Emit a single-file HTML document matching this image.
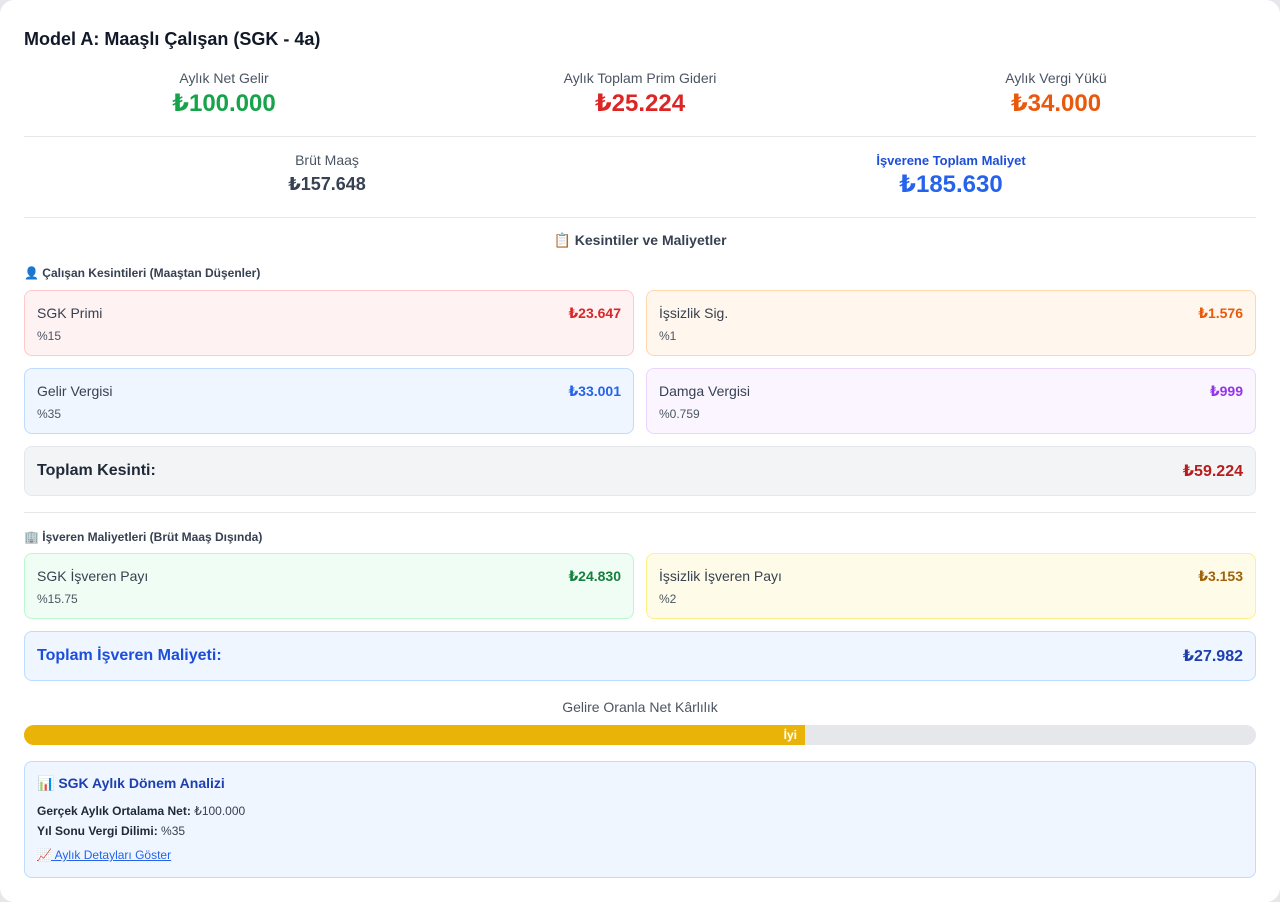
<!DOCTYPE html>
<html><head><meta charset="utf-8"><style>
*{box-sizing:border-box;margin:0;padding:0}
html,body{width:1280px;height:902px;background:#e5e7eb;overflow:hidden}
body{font-family:"Liberation Sans","DejaVu Sans",sans-serif;color:#1f2937}
.card{position:absolute;left:0;top:0;width:1280px;height:902px;background:#fff;border-radius:14px}
.abs{position:absolute}
.title{left:24px;top:29px;font-size:18px;font-weight:bold;color:#111827}
.stat{text-align:center}
.lbl{font-size:14px;color:#4b5563}
.hr{position:absolute;left:24px;width:1232px;height:1px;background:#e5e7eb}
.box{position:absolute;border:1px solid;border-radius:8px;padding:0 12px}
.box .n{position:absolute;left:12px;top:14px;font-size:14px;color:#374151}
.box .p{position:absolute;left:12px;top:38px;font-size:12px;color:#4b5563}
.box .v{position:absolute;right:12px;top:14px;font-size:14px;font-weight:bold}
.tot{position:absolute;left:24px;width:1232px;height:50px;border:1px solid;border-radius:8px;display:flex;justify-content:space-between;align-items:center;padding:0 12px;font-size:16px;font-weight:bold}
.sec{left:24px;font-size:12px;font-weight:bold;color:#374151}
</style></head><body><div class="card">
<div class="abs title">Model A: Maaşlı Çalışan (SGK - 4a)</div>

<div class="abs stat" style="left:24px;top:70px;width:400px"><div class="lbl">Aylık Net Gelir</div><div style="font-size:24px;font-weight:bold;color:#16a34a;margin-top:3px">₺100.000</div></div>
<div class="abs stat" style="left:440px;top:70px;width:400px"><div class="lbl">Aylık Toplam Prim Gideri</div><div style="font-size:24px;font-weight:bold;color:#dc2626;margin-top:3px">₺25.224</div></div>
<div class="abs stat" style="left:856px;top:70px;width:400px"><div class="lbl">Aylık Vergi Yükü</div><div style="font-size:24px;font-weight:bold;color:#ea580c;margin-top:3px">₺34.000</div></div>
<div class="hr" style="top:136px"></div>

<div class="abs stat" style="left:24px;top:152px;width:606px"><div class="lbl">Brüt Maaş</div><div style="font-size:18px;font-weight:bold;color:#374151;margin-top:6px">₺157.648</div></div>
<div class="abs stat" style="left:650px;top:153px;width:602px"><div class="lbl" style="color:#1d4ed8;font-weight:bold;font-size:13px">İşverene Toplam Maliyet</div><div style="font-size:24px;font-weight:bold;color:#2563eb;margin-top:2px">₺185.630</div></div>
<div class="hr" style="top:217px"></div>

<div class="abs" style="left:0;width:1280px;top:232px;text-align:center;font-size:14px;font-weight:bold;color:#374151">📋 Kesintiler ve Maliyetler</div>
<div class="abs sec" style="top:266px">👤 Çalışan Kesintileri (Maaştan Düşenler)</div>

<div class="box" style="left:24px;top:290px;width:610px;height:66px;background:#fef2f2;border-color:#fecaca"><div class="n">SGK Primi</div><div class="p">%15</div><div class="v" style="color:#dc2626">₺23.647</div></div>
<div class="box" style="left:646px;top:290px;width:610px;height:66px;background:#fff7ed;border-color:#fed7aa"><div class="n">İşsizlik Sig.</div><div class="p">%1</div><div class="v" style="color:#ea580c">₺1.576</div></div>
<div class="box" style="left:24px;top:368px;width:610px;height:66px;background:#eff6ff;border-color:#bfdbfe"><div class="n">Gelir Vergisi</div><div class="p">%35</div><div class="v" style="color:#2563eb">₺33.001</div></div>
<div class="box" style="left:646px;top:368px;width:610px;height:66px;background:#faf5ff;border-color:#e9d5ff"><div class="n">Damga Vergisi</div><div class="p">%0.759</div><div class="v" style="color:#9333ea">₺999</div></div>
<div class="tot" style="top:446px;background:#f3f4f6;border-color:#e5e7eb"><span style="color:#1f2937">Toplam Kesinti:</span><span style="color:#b91c1c">₺59.224</span></div>
<div class="hr" style="top:512px"></div>

<div class="abs sec" style="top:530px">🏢 İşveren Maliyetleri (Brüt Maaş Dışında)</div>
<div class="box" style="left:24px;top:553px;width:610px;height:66px;background:#f0fdf4;border-color:#bbf7d0"><div class="n">SGK İşveren Payı</div><div class="p">%15.75</div><div class="v" style="color:#15803d">₺24.830</div></div>
<div class="box" style="left:646px;top:553px;width:610px;height:66px;background:#fefce8;border-color:#fef08a"><div class="n">İşsizlik İşveren Payı</div><div class="p">%2</div><div class="v" style="color:#a16207">₺3.153</div></div>
<div class="tot" style="top:631px;background:#eff6ff;border-color:#bfdbfe"><span style="color:#1d4ed8">Toplam İşveren Maliyeti:</span><span style="color:#1e40af">₺27.982</span></div>

<div class="abs" style="left:0;width:1280px;top:699px;text-align:center;font-size:14px;color:#4b5563">Gelire Oranla Net Kârlılık</div>
<div class="abs" style="left:24px;top:725px;width:1232px;height:20px;background:#e5e7eb;border-radius:10px;overflow:hidden"><div style="width:781px;height:20px;background:#eab308;color:#fff;font-size:12px;font-weight:bold;text-align:right;padding-right:8px;line-height:20px">İyi</div></div>

<div class="abs" style="left:24px;top:761px;width:1232px;height:117px;background:#eff6ff;border:1px solid #bfdbfe;border-radius:8px">
<div class="abs" style="left:12px;top:13px;font-size:14px;font-weight:bold;color:#1e40af">📊 SGK Aylık Dönem Analizi</div>
<div class="abs" style="left:12px;top:42px;font-size:12px;color:#374151"><b style="color:#1f2937">Gerçek Aylık Ortalama Net:</b> ₺100.000</div>
<div class="abs" style="left:12px;top:62px;font-size:12px;color:#374151"><b style="color:#1f2937">Yıl Sonu Vergi Dilimi:</b> %35</div>
<div class="abs" style="left:12px;top:86px;font-size:12px;color:#2563eb;text-decoration:underline">📈 Aylık Detayları Göster</div>
</div>
</div></body></html>
